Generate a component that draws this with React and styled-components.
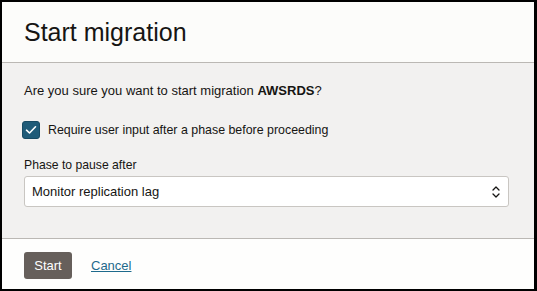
import styled, { createGlobalStyle } from "styled-components";

const GlobalStyle = createGlobalStyle`
  html, body {
    margin: 0;
    padding: 0;
    background: #000;
  }
  body {
    font-family: "Liberation Sans", Arial, sans-serif;
    color: #161513;
  }
`;

const Dialog = styled.div`
  box-sizing: border-box;
  width: 537px;
  height: 291px;
  border: 2px solid #000;
  border-right-width: 3px;
  display: flex;
  flex-direction: column;
  background: #fff;
`;

const Header = styled.div`
  height: 60px;
  display: flex;
  align-items: center;
  padding: 0 22px;
  background: #fcfcfa;
  border-bottom: 1px solid #bbb8b4;
`;

const Title = styled.h1`
  margin: 0;
  font-size: 25px;
  font-weight: 400;
  color: #161513;
`;

const Body = styled.div`
  flex: 1;
  background: #f2f1f0;
  padding: 18px 25px 0 22px;
  border-bottom: 1px solid #bbb8b4;
`;

const Question = styled.p`
  margin: 0;
  font-size: 13px;
  line-height: 20px;

  strong {
    font-weight: 700;
  }
`;

const CheckRow = styled.label`
  display: flex;
  align-items: center;
  gap: 8px;
  margin-top: 20px;
  margin-left: -2px;
  font-size: 12.4px;
  line-height: 18px;
`;

const Box = styled.span`
  box-sizing: border-box;
  width: 18px;
  height: 18px;
  border-radius: 3px;
  background: ${(p) => (p.checked ? "#1f5b78" : "#fff")};
  border: 1px solid ${(p) => (p.checked ? "#174a63" : "#8f8a85")};
  display: flex;
  align-items: center;
  justify-content: center;
`;

const FieldLabel = styled.div`
  margin-top: 18px;
  font-size: 12.2px;
  line-height: 16px;
`;

const Select = styled.div`
  box-sizing: border-box;
  margin-top: 3px;
  height: 31px;
  background: #fff;
  border: 1px solid #c9c6c2;
  border-radius: 3px;
  display: flex;
  align-items: center;
  justify-content: space-between;
  padding: 0 8px 0 7px;
  font-size: 13px;
`;

const Footer = styled.div`
  height: 50px;
  display: flex;
  align-items: center;
  gap: 19px;
  padding: 3px 22px 0;
  box-sizing: border-box;
  background: #fefefd;
`;

const Button = styled.button`
  height: 27px;
  width: 48px;
  border: none;
  border-radius: 3px;
  background: #665f5b;
  color: #fff;
  font-family: inherit;
  font-size: 13px;
  padding: 0;
`;

const Link = styled.a`
  color: #1e6a8c;
  font-size: 13px;
  text-decoration: underline;
`;

export default function App() {
  return (
    <>
      <GlobalStyle />
      <Dialog>
        <Header>
          <Title>Start migration</Title>
        </Header>
        <Body>
          <Question>
            Are you sure you want to start migration <strong>AWSRDS</strong>?
          </Question>
          <CheckRow>
            <Box checked>
              <svg width="12" height="10" viewBox="0 0 12 10">
                <path
                  d="M1.5 5.2 L4.5 8 L10.5 1.8"
                  fill="none"
                  stroke="#fff"
                  strokeWidth="1.6"
                  strokeLinecap="round"
                  strokeLinejoin="round"
                />
              </svg>
            </Box>
            Require user input after a phase before proceeding
          </CheckRow>
          <FieldLabel>Phase to pause after</FieldLabel>
          <Select>
            <span>Monitor replication lag</span>
            <svg width="8" height="14" viewBox="0 0 8 14">
              <path
                d="M1 5 L4 2 L7 5 M1 9 L4 12 L7 9"
                fill="none"
                stroke="#161513"
                strokeWidth="1.3"
                strokeLinecap="round"
                strokeLinejoin="round"
              />
            </svg>
          </Select>
        </Body>
        <Footer>
          <Button>Start</Button>
          <Link href="#">Cancel</Link>
        </Footer>
      </Dialog>
    </>
  );
}
